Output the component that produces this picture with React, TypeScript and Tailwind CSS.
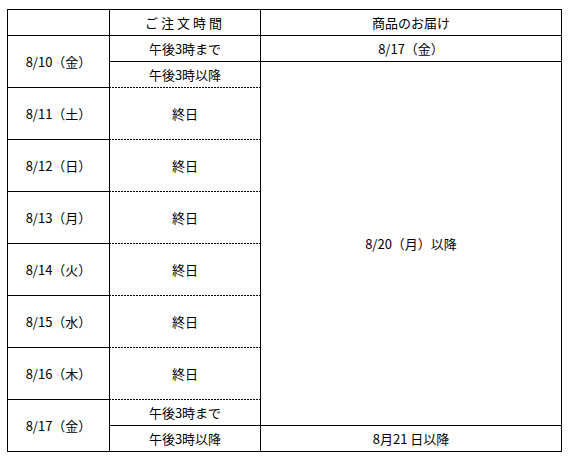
const dash =
  "bg-[linear-gradient(to_right,#000_2px,transparent_2px)] bg-[length:3px_1px] bg-repeat-x bg-bottom";

const DAYS = ["8/11（土）", "8/12（日）", "8/13（月）", "8/14（火）", "8/15（水）", "8/16（木）"];

export default function App() {
  const cell = "border border-black p-0 text-center align-middle";
  return (
    <div className="min-h-[458px] bg-white pl-[7px] pt-[9px] font-['Noto_Sans_CJK_JP',sans-serif] text-[13px] leading-none text-black">
      <table className="table-fixed border-collapse">
        <colgroup>
          <col className="w-[102px]" />
          <col className="w-[151px]" />
          <col className="w-[301px]" />
        </colgroup>
        <tbody>
          <tr className="h-[26px]">
            <td className={cell}></td>
            <td className={`${cell} tracking-[3px]`}>ご注文時間</td>
            <td className={cell}>商品のお届け</td>
          </tr>
          <tr className="h-[26px]">
            <td className={cell} rowSpan={2}>8/10（金）</td>
            <td className={cell}>午後3時まで</td>
            <td className={cell}>8/17（金）</td>
          </tr>
          <tr className="h-[26px]">
            <td className={`${cell} border-b-0 ${dash}`}>午後3時以降</td>
            <td className={cell} rowSpan={8}>8/20（月）以降</td>
          </tr>
          {DAYS.map((d) => (
            <tr key={d} className="h-[52px]">
              <td className={cell}>{d}</td>
              <td className={`${cell} border-y-0 ${dash}`}>終日</td>
            </tr>
          ))}
          <tr className="h-[26px]">
            <td className={cell} rowSpan={2}>8/17（金）</td>
            <td className={`${cell} border-t-0`}>午後3時まで</td>
          </tr>
          <tr className="h-[26px]">
            <td className={cell}>午後3時以降</td>
            <td className={cell}>8月21 日以降</td>
          </tr>
        </tbody>
      </table>
    </div>
  );
}
